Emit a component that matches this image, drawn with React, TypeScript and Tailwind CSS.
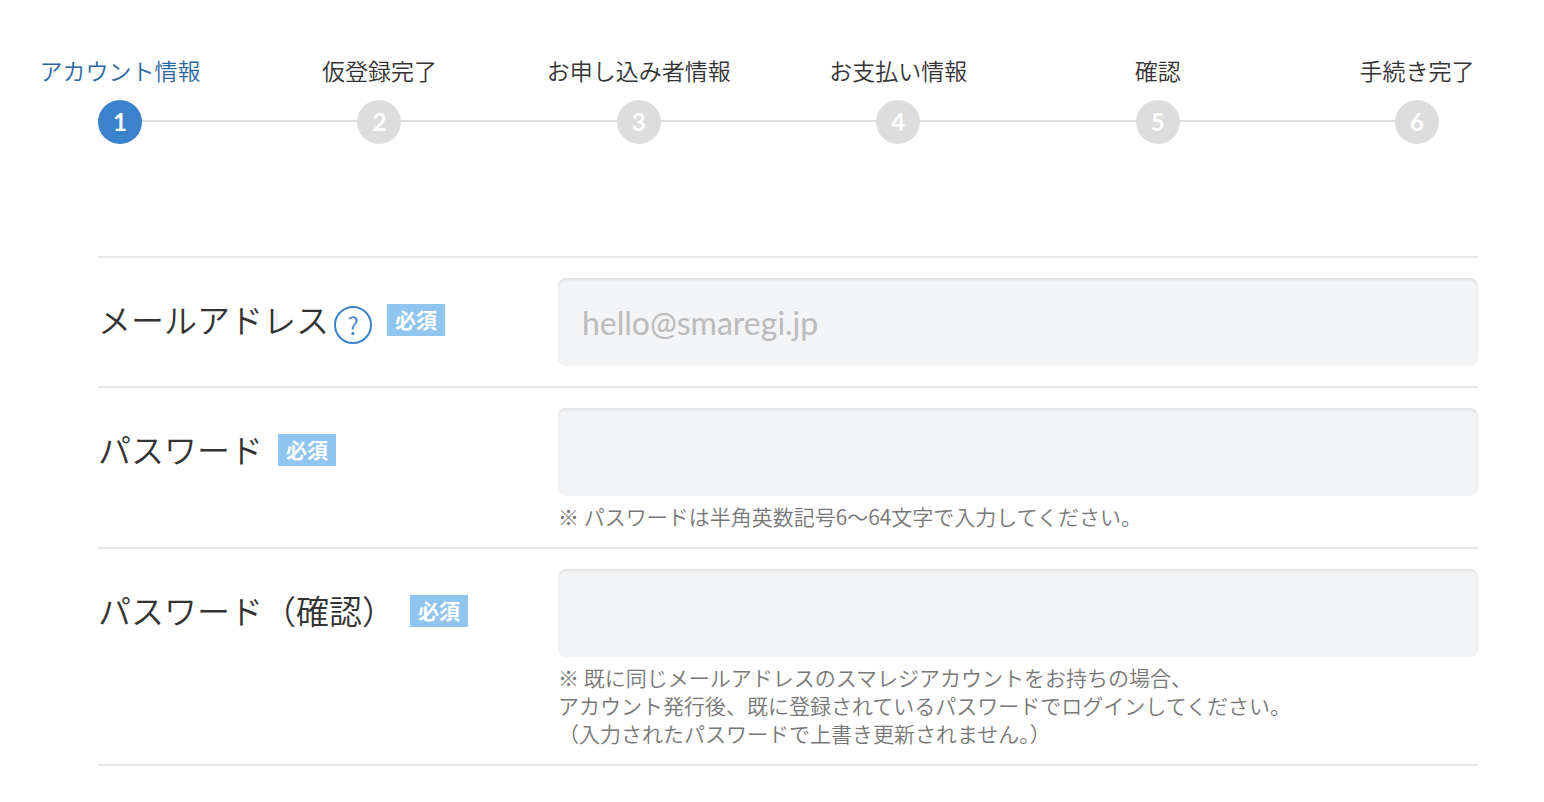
import React from "react";

const steps = [
  "アカウント情報",
  "仮登録完了",
  "お申し込み者情報",
  "お支払い情報",
  "確認",
  "手続き完了",
];

const StepBar = () => {
  const current = 0;

  return (
    <ol className="flex pr-[39px]">
      {steps.map((step, i) => (
        <li
          key={step}
          aria-current={i === current ? "step" : undefined}
          className={i < steps.length - 1 ? "flex flex-1 items-end" : "flex items-end"}
        >
          <div className="flex w-11 flex-col items-center">
            <span
              className={`whitespace-nowrap text-[23px] leading-8 ${
                i === current ? "text-[#2b679f]" : "text-[#333333]"
              }`}
            >
              {step}
            </span>
            <span
              className={`mt-[13px] flex h-11 w-11 items-center justify-center rounded-full text-2xl font-bold text-white ${
                i === current ? "bg-[#3a82c9]" : "bg-[#dddddd]"
              }`}
            >
              {i + 1}
            </span>
          </div>
          {i < steps.length - 1 && (
            <div className="mb-[22px] h-0.5 flex-1 bg-[#dddddd]" />
          )}
        </li>
      ))}
    </ol>
  );
};

type FieldProps = {
  id: string;
  label: string;
  type: string;
  placeholder?: string;
  help?: boolean;
  hint?: string[];
};

const Field = ({ id, label, type, placeholder, help, hint }: FieldProps) => {
  return (
    <div className="flex border-t-2 border-[#e8e8e8] py-5">
      <div className="flex w-1/3 items-start pt-[26px]">
        <label
          htmlFor={id}
          className="whitespace-nowrap text-[33px] leading-8 text-[#333333]"
        >
          {label}
        </label>
        {help && (
          <button
            type="button"
            aria-label="ヘルプ"
            className="ml-[5px] mt-0.5 flex h-[38px] w-[38px] shrink-0 items-center justify-center rounded-full border-2 border-[#3a82c9] font-['Noto_Sans_CJK_JP',sans-serif] text-2xl text-[#3a82c9]"
          >
            ?
          </button>
        )}
        <span className="ml-[15px] shrink-0 bg-[#8fc5ee] px-2 text-[21px] leading-8 font-bold text-white">
          必須
        </span>
      </div>
      <div className="flex-1">
        <input
          id={id}
          type={type}
          placeholder={placeholder}
          className="block h-[88px] w-full rounded-lg bg-[#f3f4f6] px-6 text-[32px] font-normal text-[#333333] shadow-[inset_0_2px_3px_rgba(0,0,0,0.08)] outline-none placeholder:text-[#bbbbbb]"
        />
        {hint && (
          <p className="-mb-[3px] mt-1.5 font-['Noto_Sans_CJK_JP',sans-serif] text-[21px] leading-7 text-[#777777]">
            {hint.map((line) => (
              <span key={line} className="block">
                {line}
              </span>
            ))}
          </p>
        )}
      </div>
    </div>
  );
};

const App = () => {
  return (
    <main
      lang="ja"
      className="bg-white pb-9 pl-[98px] pr-[66px] pt-[55px] font-['Lato','Noto_Sans_CJK_JP',sans-serif] font-[350]"
    >
      <StepBar />
      <form className="mt-28 border-b-2 border-[#e8e8e8]">
        <Field
          id="email"
          label="メールアドレス"
          type="email"
          placeholder="hello@smaregi.jp"
          help
        />
        <Field
          id="password"
          label="パスワード"
          type="password"
          hint={["※ パスワードは半角英数記号6〜64文字で入力してください。"]}
        />
        <Field
          id="password-confirm"
          label="パスワード（確認）"
          type="password"
          hint={[
            "※ 既に同じメールアドレスのスマレジアカウントをお持ちの場合、",
            "アカウント発行後、既に登録されているパスワードでログインしてください。",
            "（入力されたパスワードで上書き更新されません。）",
          ]}
        />
      </form>
    </main>
  );
};

export default App;
